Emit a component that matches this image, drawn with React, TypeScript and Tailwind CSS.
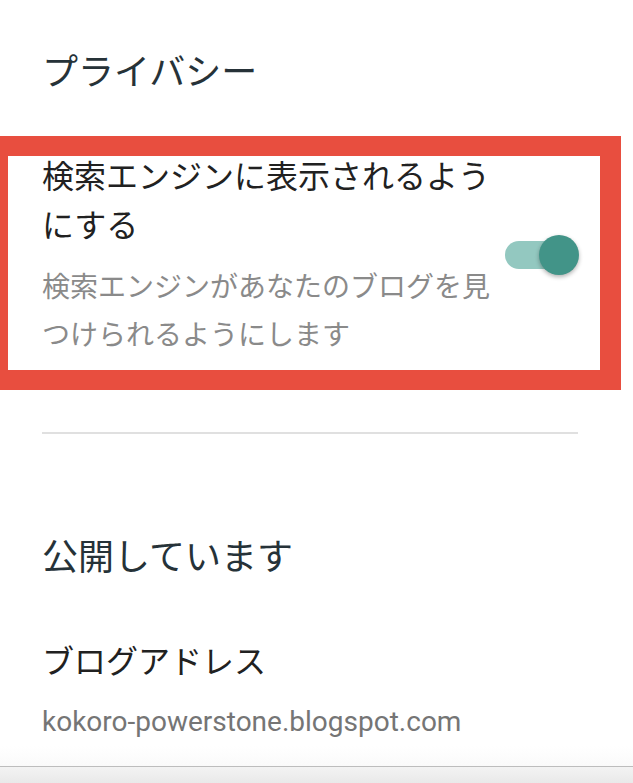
export default function App() {
  const jp = { fontFamily: '"Noto Sans CJK JP", "Noto Sans", sans-serif' };
  return (
    <div className="w-[633px] h-[783px] bg-white flex flex-col overflow-hidden" style={jp}>
      <div className="pt-[45px] pl-[42px] text-[36px] leading-[48px] text-[#263238] whitespace-nowrap">
        プライバシー
      </div>

      <div className="mt-[43px] w-[621px] border-t-[20px] border-b-[20px] border-l-[8px] border-r-[21px] border-[#e84e3f] bg-white">
        <div className="h-[214px] flex">
          <div className="pl-[34px] -mt-[6px]">
            <div className="text-[32px] leading-[49px] text-[#212121] whitespace-nowrap">
              検索エンジンに表示されるよう
              <br />
              にする
            </div>
            <div className="mt-[13px] text-[28px] leading-[48px] text-[#8a8a8a] whitespace-nowrap">
              検索エンジンがあなたのブログを見
              <br />
              つけられるようにします
            </div>
          </div>
          <div className="ml-auto mr-[21px] mt-[79px] relative w-[74px] h-[40px] shrink-0">
            <div className="absolute left-0 top-[6px] w-[66px] h-[28px] rounded-full bg-[#93c8c0]" />
            <div className="absolute right-0 top-0 w-[40px] h-[40px] rounded-full bg-[#429488] shadow-[0_2px_4px_rgba(0,0,0,0.3)]" />
          </div>
        </div>
      </div>

      <div className="mt-[42px] ml-[42px] w-[536px] h-[2px] bg-[#e0e0e0]" />

      <div className="mt-[96px] pl-[42px] text-[36px] leading-[48px] text-[#263238] whitespace-nowrap">
        公開しています
      </div>

      <div className="mt-[57px] pl-[42px] text-[32px] leading-[48px] text-[#212121] whitespace-nowrap">
        ブログアドレス
      </div>

      <div
        className="mt-[19px] pl-[42px] text-[28px] leading-[40px] text-[#757575] whitespace-nowrap"
        style={{ fontFamily: 'Roboto, "Liberation Sans", sans-serif' }}
      >
        kokoro-powerstone.blogspot.com
      </div>

      <div className="mt-auto h-[20px] bg-gradient-to-b from-white to-[#fafafa]" />
      <div className="h-[17px] border-t border-[#bdbdbd] bg-gradient-to-b from-[#f3f3f3] to-[#e9e9e9]" />
    </div>
  );
}
